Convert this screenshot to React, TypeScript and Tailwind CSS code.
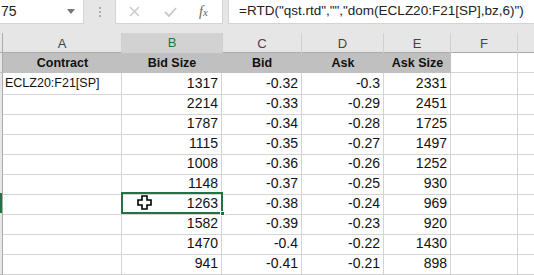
import React from "react";

const rows: [string, string, string, string, string][] = [
  ["ECLZ20:F21[SP]", "1317", "-0.32", "-0.3", "2331"],
  ["", "2214", "-0.33", "-0.29", "2451"],
  ["", "1787", "-0.34", "-0.28", "1725"],
  ["", "1115", "-0.35", "-0.27", "1497"],
  ["", "1008", "-0.36", "-0.26", "1252"],
  ["", "1148", "-0.37", "-0.25", "930"],
  ["", "1263", "-0.38", "-0.24", "969"],
  ["", "1582", "-0.39", "-0.23", "920"],
  ["", "1470", "-0.4", "-0.22", "1430"],
  ["", "941", "-0.41", "-0.21", "898"],
];

const cols = "grid-cols-[3px_119px_100px_80px_82px_67px_67px_16px]";
const font = { fontFamily: "'Liberation Sans', Arial, sans-serif" };

export default function App() {
  return (
    <div className="w-[534px] h-[275px] overflow-hidden bg-white relative" style={font}>
      {/* toolbar */}
      <div className="h-[33px] bg-[#e6e6e6] flex items-start">
        <div className="w-[84px] h-[24px] bg-white border-r border-b border-[#d4d4d4] flex items-center justify-between pl-[1px] pr-[8px] text-[14px] text-[#222]">
          <span>75</span>
          <svg width="8" height="5" viewBox="0 0 8 5"><path d="M0 0h8L4 5z" fill="#777" /></svg>
        </div>
        <div className="w-[31px] h-[24px] flex flex-col items-center justify-center gap-[2px]">
          <div className="w-[2px] h-[2px] bg-[#b0b0b0]" />
          <div className="w-[2px] h-[2px] bg-[#b0b0b0]" />
          <div className="w-[2px] h-[2px] bg-[#b0b0b0]" />
        </div>
        <div className="w-[108px] h-[24px] bg-white border-r border-b border-l border-[#d4d4d4] flex items-center">
          <svg className="ml-[13px]" width="11" height="11" viewBox="0 0 11 11"><path d="M1 1l9 9M10 1l-9 9" stroke="#c8c8c8" strokeWidth="1.4" /></svg>
          <svg className="ml-[24px]" width="13" height="10" viewBox="0 0 13 10"><path d="M1 5l4 4 7-8" stroke="#c8c8c8" strokeWidth="1.8" fill="none" /></svg>
          <span className="ml-[22px] text-[14px] italic text-[#666]" style={{ fontFamily: "'Liberation Serif', serif" }}>f<span className="text-[11px]">x</span></span>
        </div>
        <div className="w-[5px]" />
        <div className="flex-1 h-[24px] bg-white border-l border-b border-[#d4d4d4] flex items-center pl-[10px] text-[13.5px] text-[#222] whitespace-nowrap overflow-hidden">
          =RTD("qst.rtd","","dom(ECLZ20:F21[SP],bz,6)")
        </div>
      </div>

      {/* column headers */}
      <div className={`grid ${cols} h-[20px] bg-[#e6e6e6] border-b border-[#ababab] text-[13px] text-[#444]`}>
        <div className="border-r border-[#ababab]" />
        <div className="border-r border-[#d0d0d0] flex items-center justify-center">A</div>
        <div className="bg-[#d2d2d2] border-b-2 border-[#217346] text-[#217346] flex items-center justify-center -mb-[1px]">B</div>
        <div className="border-l border-r border-[#d0d0d0] flex items-center justify-center">C</div>
        <div className="border-r border-[#d0d0d0] flex items-center justify-center">D</div>
        <div className="border-r border-[#d0d0d0] flex items-center justify-center">E</div>
        <div className="border-r border-[#d0d0d0] flex items-center justify-center">F</div>
        <div />
      </div>

      {/* header row */}
      <div className={`grid ${cols} h-[20px] text-[12.5px] font-bold text-[#111]`}>
        <div className="bg-[#e6e6e6] border-r border-[#ababab] border-b border-b-[#c0c0c0]" />
        {["Contract", "Bid Size", "Bid", "Ask", "Ask Size"].map((h) => (
          <div key={h} className="bg-[#c0c0c0] flex items-center justify-center">{h}</div>
        ))}
        <div className="border-r border-b border-[#d4d4d4]" />
        <div className="border-b border-[#d4d4d4]" />
      </div>

      {rows.map((r, i) => (
        <div key={i} className={`grid ${cols} h-[20px] text-[14px] text-[#111]`}>
          <div className={`${i === 6 ? "bg-[#217346]" : "bg-[#e6e6e6]"} border-r border-[#ababab] border-b border-b-[#c0c0c0]`} />
          <div className="border-r border-b border-[#d4d4d4] flex items-center pl-[2px] whitespace-nowrap text-[12.5px]">{r[0]}</div>
          {r.slice(1).map((v, j) => (
            <div key={j} className="border-r border-b border-[#d4d4d4] flex items-center justify-end pr-[3px]">{v}</div>
          ))}
          <div className="border-r border-b border-[#d4d4d4]" />
          <div className="border-b border-[#d4d4d4]" />
        </div>
      ))}

      {/* selection */}
      <div className="absolute left-[121px] top-[192px] w-[102px] h-[22px] border-2 border-[#217346]" />
      <div className="absolute left-[220px] top-[211px] w-[5px] h-[5px] bg-[#217346] border border-white" />
      {/* cursor */}
      <svg className="absolute left-[137px] top-[195px]" width="15" height="15" viewBox="0 0 15 15">
        <path d="M5 1h5v4h4v5h-4v4H5v-4H1V5h4z" fill="white" stroke="black" strokeWidth="1.6" />
      </svg>
    </div>
  );
}
